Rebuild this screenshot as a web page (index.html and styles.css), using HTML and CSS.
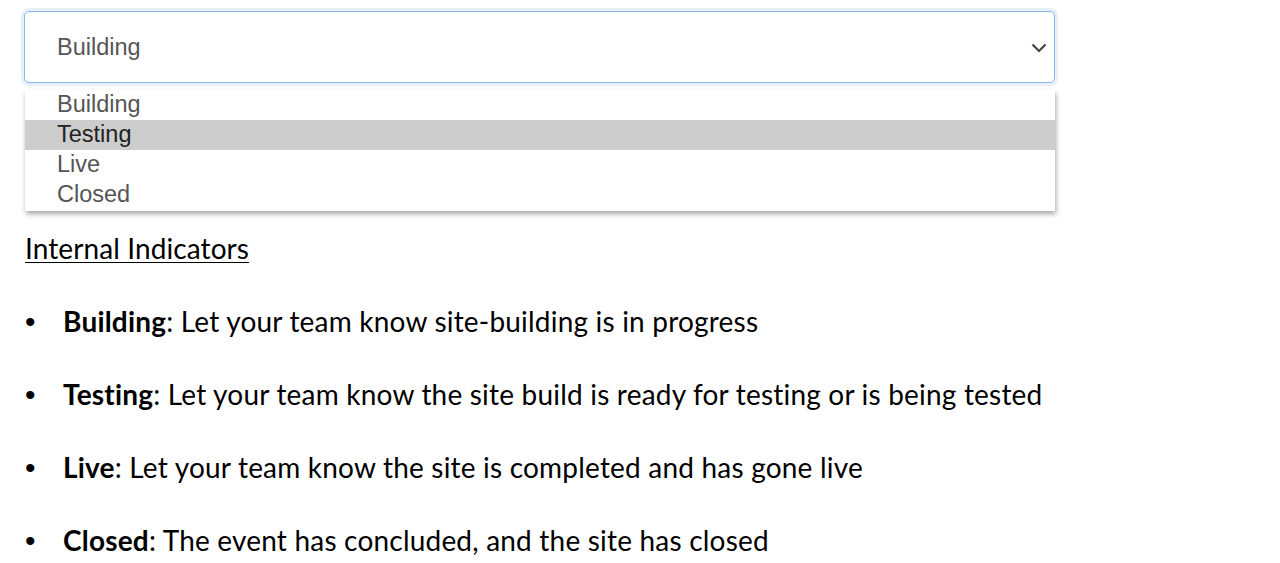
FILE: index.html
```html
<!DOCTYPE html>
<html lang="en">
  <head>
    <meta charset="UTF-8" />
    <meta name="viewport" content="width=device-width, initial-scale=1.0" />
    <title>Site Status</title>
    <link rel="stylesheet" href="styles.css">
  </head>
  <body>
    <div class="status-picker">
      <div class="select">
        <span class="select-value">Building</span>
        <svg class="chevron" width="16" height="10" viewBox="0 0 16 10">
          <polyline points="1.5,1.5 8,8 14.5,1.5" fill="none" stroke="#444" stroke-width="2.2" />
        </svg>
      </div>
      <ul class="options">
        <li class="option">Building</li>
        <li class="option active">Testing</li>
        <li class="option">Live</li>
        <li class="option">Closed</li>
      </ul>
    </div>

    <div class="indicators">
      <h2 class="indicators-title">Internal Indicators</h2>
      <ul class="indicator-list">
        <li><b>Building</b>: Let your team know site-building is in progress</li>
        <li><b>Testing</b>: Let your team know the site build is ready for testing or is being tested</li>
        <li><b>Live</b>: Let your team know the site is completed and has gone live</li>
        <li><b>Closed</b>: The event has concluded, and the site has closed</li>
      </ul>
    </div>
  </body>
</html>
```

FILE: styles.css
```css
*,
*::before,
*::after {
  box-sizing: border-box;
}

body {
  margin: 0;
  background-color: #fff;
}

/* The status dropdown */

.status-picker {
  width: 1031px;
  margin: 11px 0 0 24px;
  font-family: "Liberation Sans", Arial, sans-serif;
}

.select {
  height: 72px;
  border: 1px solid #86b7e8;
  border-radius: 5px;
  box-shadow: 0 0 0 3px rgba(120, 170, 230, 0.18);
  display: flex;
  align-items: center;
  justify-content: space-between;
  padding: 0 7px 0 32px;
}

.select-value {
  font-size: 23.5px;
  color: #555;
}

.chevron {
  margin-top: 2px;
}

.options {
  list-style: none;
  margin: 7px 0 0 1px;
  padding: 0 0 1px;
  background-color: #fff;
  box-shadow: 1px 3px 5px rgba(0, 0, 0, 0.35);
}

.option {
  height: 30px;
  line-height: 29px;
  padding-left: 32px;
  font-size: 23.5px;
  color: #555;
}

.option.active {
  background-color: #cdcdcd;
  color: #222;
}

/* The explanation below */

.indicators {
  font-family: Lato, "Open Sans", sans-serif;
  color: #000;
  padding-left: 25px;
}

.indicators-title {
  margin: 20px 0 0;
  font-size: 28px;
  font-weight: normal;
  letter-spacing: 0.1px;
  text-decoration: underline;
  text-underline-offset: 3px;
  text-decoration-thickness: 1px;
}

.indicator-list {
  list-style: none;
  margin: 0;
  padding: 0;
}

.indicator-list li {
  position: relative;
  margin-top: 40px;
  padding-left: 38px;
  font-size: 28px;
  line-height: 33px;
  letter-spacing: 0.2px;
}

.indicator-list li::before {
  content: "\2022";
  position: absolute;
  left: 0;
  font-size: 30px;
  font-family: "Liberation Sans", Arial, sans-serif;
}

.indicator-list b {
  font-weight: bold;
}
```
